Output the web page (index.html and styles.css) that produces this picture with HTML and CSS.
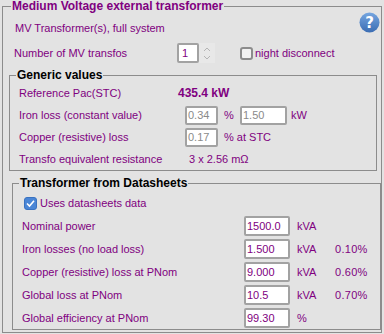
FILE: index.html
```html
<!DOCTYPE html>
<html lang="en">

<head>
    <meta charset="UTF-8">
    <title>Medium Voltage external transformer</title>
    <link rel="stylesheet" href="styles.css">
</head>

<body>

    <fieldset class="group outer">
        <legend>Medium Voltage external transformer</legend>

        <!-- En-tête avec aide -->
        <div class="head-row">
            <span class="head-label">MV Transformer(s), full system</span>
            <svg class="help" width="21" height="21" viewBox="0 0 21 21">
                <defs>
                    <linearGradient id="hg" x1="0" y1="0" x2="0" y2="1">
                        <stop offset="0" stop-color="#76a6e0"/>
                        <stop offset="1" stop-color="#3b6db3"/>
                    </linearGradient>
                </defs>
                <circle cx="10.5" cy="10.5" r="10" fill="url(#hg)"/>
                <text x="10.5" y="16" text-anchor="middle" class="help-q">?</text>
            </svg>
        </div>

        <!-- Nombre de transfos -->
        <div class="count-row">
            <span class="count-label">Number of MV transfos</span>
            <span class="field count-field">1</span>
            <svg class="spin" width="16" height="20" viewBox="0 0 16 20">
                <rect x="0" y="0" width="16" height="20" fill="#e8e8e8"/>
                <polyline points="5,8 8,5 11,8" fill="none" stroke="#b4b4b4" stroke-width="1"/>
                <polyline points="5,13 8,16 11,13" fill="none" stroke="#b4b4b4" stroke-width="1"/>
            </svg>
            <span class="check"></span>
            <span class="check-text">night disconnect</span>
        </div>

        <!-- Valeurs génériques -->
        <fieldset class="group generic">
            <legend>Generic values</legend>
            <div class="row">
                <span class="lbl">Reference Pac(STC)</span>
                <span class="strong">435.4 kW</span>
            </div>
            <div class="row">
                <span class="lbl">Iron loss (constant value)</span>
                <span class="field gfield small dim">0.34</span>
                <span class="unit pct">%</span>
                <span class="field gfield wide dim">1.50</span>
                <span class="unit kw">kW</span>
            </div>
            <div class="row">
                <span class="lbl">Copper (resistive) loss</span>
                <span class="field gfield small dim">0.17</span>
                <span class="unit pct">% at STC</span>
            </div>
            <div class="row">
                <span class="lbl">Transfo equivalent resistance</span>
                <span class="res">3 x 2.56 mΩ</span>
            </div>
        </fieldset>

        <!-- Transformateur depuis fiches techniques -->
        <fieldset class="group sheets">
            <legend>Transformer from Datasheets</legend>
            <div class="use-row">
                <svg class="checked" width="13" height="13" viewBox="0 0 13 13">
                    <rect x="0.5" y="0.5" width="12" height="12" rx="2.5" fill="#4a86d6" stroke="#3a72c0"/>
                    <polyline points="3,6.5 5.5,9 10,3.8" fill="none" stroke="#fff" stroke-width="1.6"/>
                </svg>
                <span>Uses datasheets data</span>
            </div>
            <div class="srow">
                <span class="slbl">Nominal power</span>
                <span class="field sfield">1500.0</span>
                <span class="sunit">kVA</span>
            </div>
            <div class="srow">
                <span class="slbl">Iron losses (no load loss)</span>
                <span class="field sfield">1.500</span>
                <span class="sunit">kVA</span>
                <span class="spct">0.10%</span>
            </div>
            <div class="srow">
                <span class="slbl">Copper (resistive) loss at PNom</span>
                <span class="field sfield">9.000</span>
                <span class="sunit">kVA</span>
                <span class="spct">0.60%</span>
            </div>
            <div class="srow">
                <span class="slbl">Global loss at PNom</span>
                <span class="field sfield">10.5</span>
                <span class="sunit">kVA</span>
                <span class="spct">0.70%</span>
            </div>
            <div class="srow">
                <span class="slbl">Global efficiency at PNom</span>
                <span class="field sfield">99.30</span>
                <span class="sunit">%</span>
            </div>
        </fieldset>
    </fieldset>

</body>

</html>
```

FILE: styles.css
```css
/* Style global */
body, html {
    margin: 0;
    padding: 0;
    overflow: hidden;
}

body {
    width: 384px;
    height: 334px;
    background-color: #e3e3e3;
    font-family: "Liberation Sans", Arial, sans-serif;
    font-size: 11px;
    color: #800080;
    padding-left: 2px;
    box-sizing: border-box;
}

/* Cadres de groupe */
.group {
    margin: 0;
    padding: 0;
    border: 1px solid #8c8c8c;
    box-sizing: border-box;
    min-inline-size: 0;
}

.group legend {
    padding: 0 1px;
    margin-left: 6px;
    font-size: 12px;
    font-weight: bold;
    line-height: 14px;
    color: #000;
}

.outer {
    width: 380px;
    padding-bottom: 2px;
}

.outer > legend {
    margin-left: 8px;
    line-height: 12px;
    color: #800080;
}

/* En-tête */
.head-row {
    display: flex;
    justify-content: space-between;
    height: 28px;
}

.head-label {
    margin: 10px 0 0 12px;
    line-height: 13px;
}

.help {
    margin: 0 1px 0 0;
}

.help-q {
    font-family: "DejaVu Sans", sans-serif;
    font-size: 15px;
    font-weight: bold;
    fill: #fff;
}

/* Champs de saisie */
.field {
    display: inline-block;
    box-sizing: border-box;
    height: 20px;
    line-height: 16px;
    padding-left: 1px;
    background-color: #fff;
    border: 2px solid #a2a2a2;
    border-radius: 2px;
}

.dim {
    color: #8a8a8a;
}

/* Nombre de transfos */
.count-row {
    display: flex;
    align-items: center;
    height: 20px;
    margin-top: 3px;
}

.count-label {
    width: 163px;
    padding-left: 11px;
}

.count-field {
    width: 22px;
    padding-left: 3px;
}

.check {
    width: 13px;
    height: 13px;
    box-sizing: border-box;
    margin-left: 25px;
    border: 2px solid #8c8c8c;
    border-radius: 3px;
    background-color: #f2f2f2;
}

.check-text {
    margin-left: 2px;
}

/* Valeurs génériques */
.generic {
    width: 368px;
    margin: 5px 0 0 6px;
}

.row {
    display: flex;
    align-items: center;
    height: 22px;
}

.row .lbl {
    width: 159px;
    padding-left: 9px;
}

.strong {
    font-weight: bold;
    font-size: 12px;
}

.gfield {
    margin-left: 7px;
    height: 19px;
    line-height: 15px;
}

.gfield.small {
    width: 33px;
}

.gfield.wide {
    width: 47px;
    margin-left: 0;
}

.unit.pct {
    margin-left: 6px;
    width: 16px;
}

.row .unit.pct:last-child {
    width: auto;
}

.unit.kw {
    margin-left: 4px;
}

.res {
    margin-left: 11px;
}

/* Fiches techniques */
.sheets {
    width: 369px;
    margin: 5px 0 0 9px;
}

.use-row {
    display: flex;
    align-items: center;
    gap: 3px;
    height: 24px;
    padding: 2px 0 0 11px;
    box-sizing: border-box;
}

.srow {
    display: flex;
    align-items: center;
    height: 23px;
}

.slbl {
    width: 222px;
    padding-left: 9px;
}

.sfield {
    width: 46px;
}

.sunit {
    width: 38px;
    margin-left: 7px;
}

.spct {
    letter-spacing: 0.3px;
}
```
